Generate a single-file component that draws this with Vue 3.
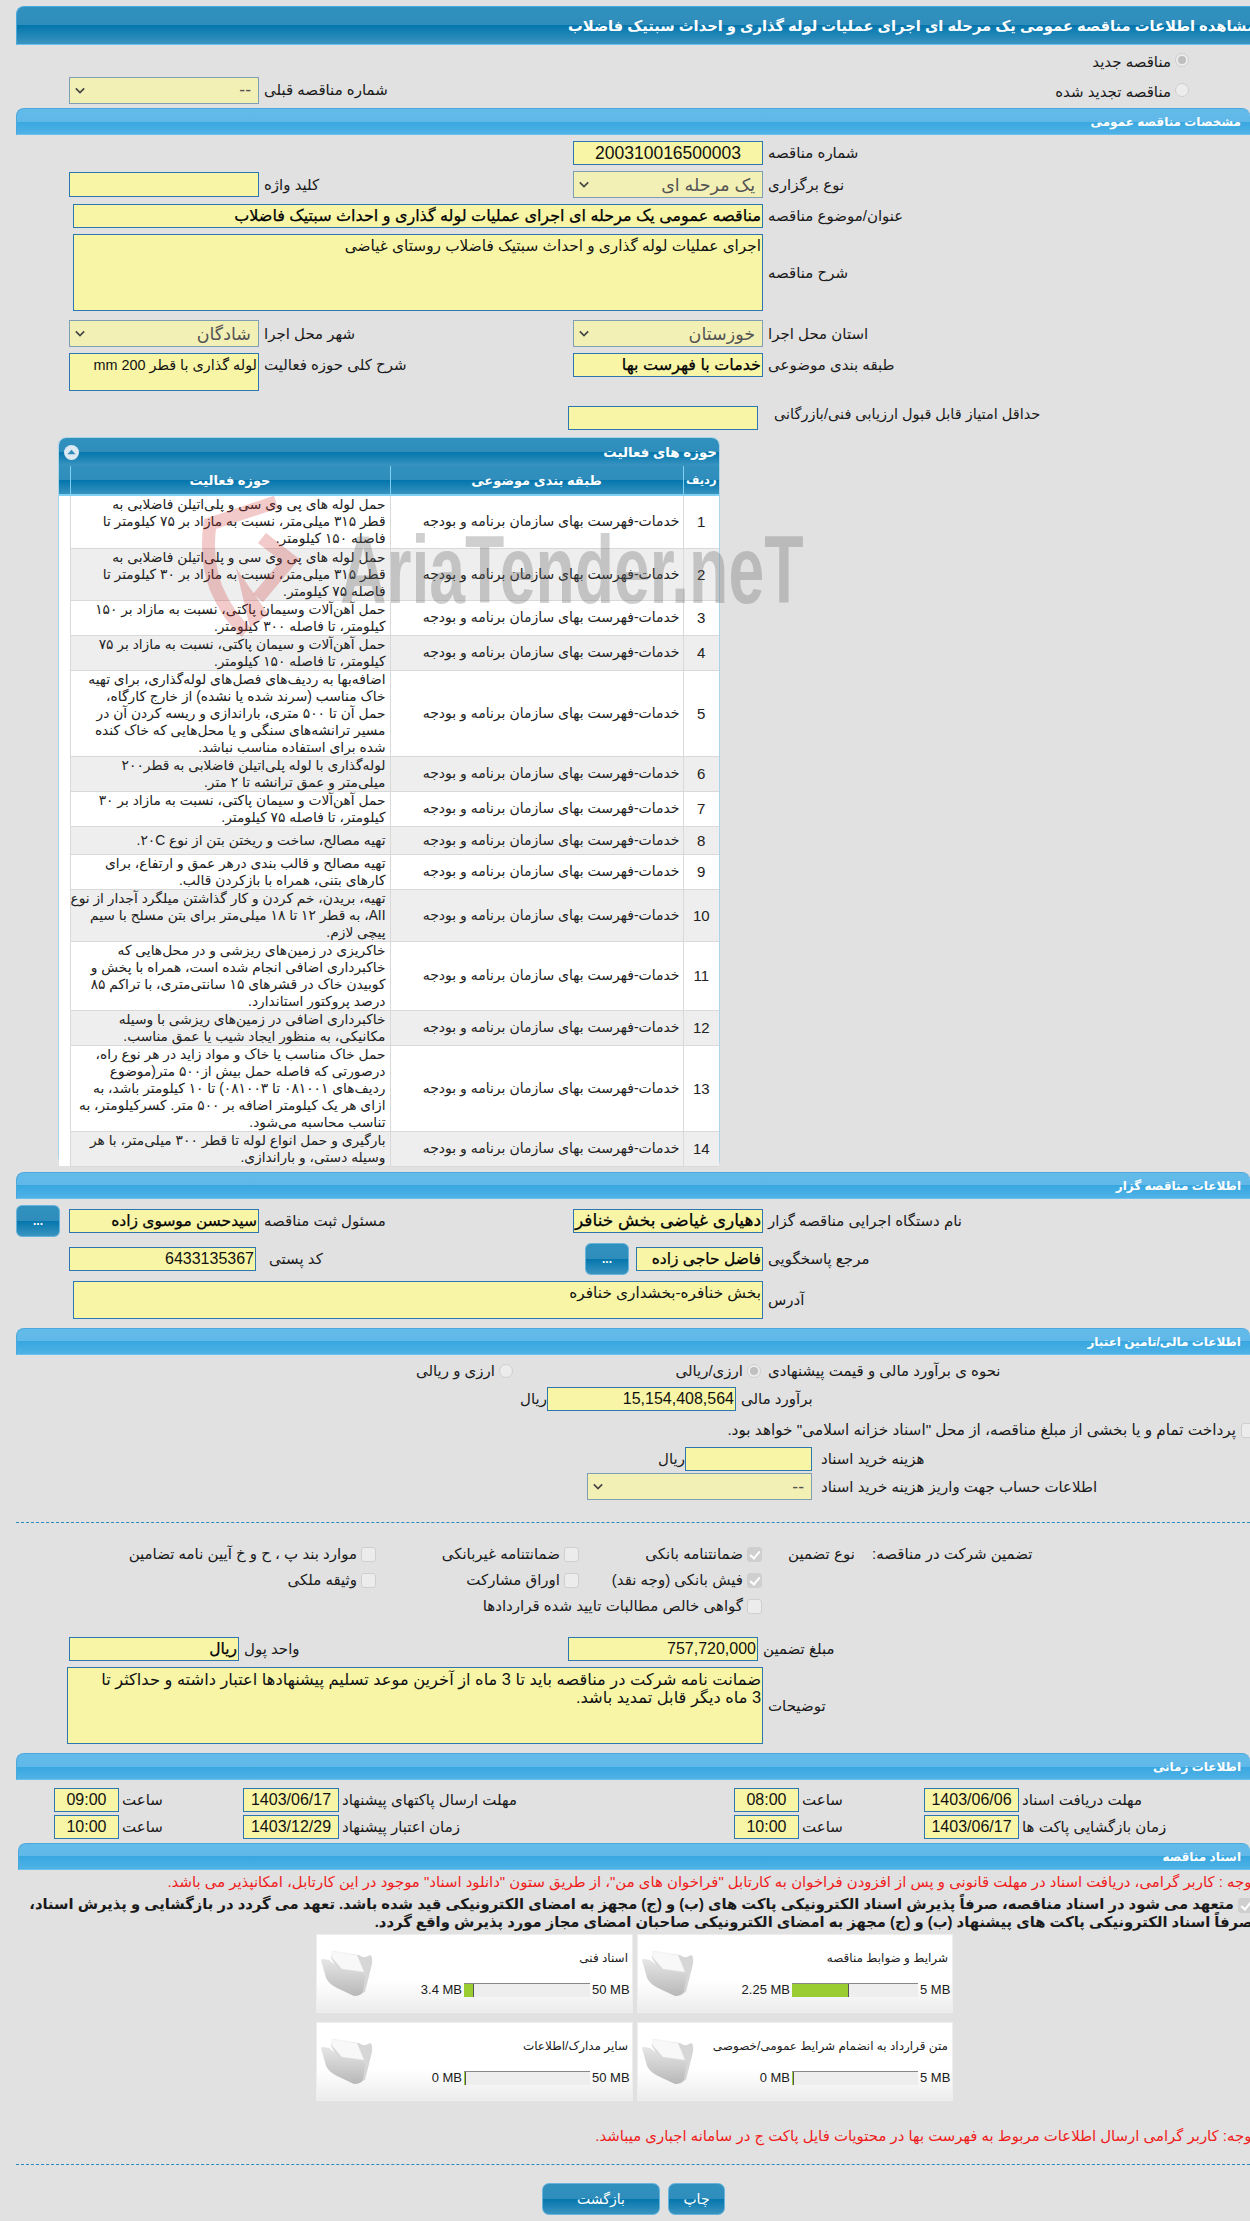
<script setup>
const rows = [
  ["حمل لوله های پی وی سی و پلی‌اتیلن فاضلابی به\nقطر ۳۱۵ میلی‌متر، نسبت به مازاد بر ۷۵ کیلومتر تا\nفاصله ۱۵۰ کیلومتر.", 52],
  ["حمل لوله های پی وی سی و پلی‌اتیلن فاضلابی به\nقطر ۳۱۵ میلی‌متر، نسبت به مازاد بر ۳۰ کیلومتر تا\nفاصله ۷۵ کیلومتر.", 52],
  ["حمل آهن‌آلات وسیمان پاکتی، نسبت به مازاد بر ۱۵۰\nکیلومتر، تا فاصله ۳۰۰ کیلومتر.", 35],
  ["حمل آهن‌آلات و سیمان پاکتی، نسبت به مازاد بر ۷۵\nکیلومتر، تا فاصله ۱۵۰ کیلومتر.", 35],
  ["اضافه‌بها به ردیف‌های فصل‌های لوله‌گذاری، برای تهیه\nخاک مناسب (سرند شده یا نشده) از خارج کارگاه،\nحمل آن تا ۵۰۰ متری، باراندازی و ریسه کردن آن در\nمسیر ترانشه‌های سنگی و یا محل‌هایی که خاک کنده\nشده برای استفاده مناسب نباشد.", 86],
  ["لوله‌گذاری با لوله پلی‌اتیلن فاضلابی به قطر۲۰۰\nمیلی‌متر و عمق ترانشه تا ۲ متر.", 35],
  ["حمل آهن‌آلات و سیمان پاکتی، نسبت به مازاد بر ۳۰\nکیلومتر، تا فاصله ۷۵ کیلومتر.", 35],
  ["تهیه مصالح، ساخت و ریختن بتن از نوع ۲۰C.", 28],
  ["تهیه مصالح و قالب بندی درهر عمق و ارتفاع، برای\nکارهای بتنی، همراه با بازکردن قالب.", 35],
  ["تهیه، بریدن، خم کردن و کار گذاشتن میلگرد آجدار از نوع\nAII، به قطر ۱۲ تا ۱۸ میلی‌متر برای بتن مسلح با سیم\nپیچی لازم.", 52],
  ["خاکریزی در زمین‌های ریزشی و در محل‌هایی که\nخاکبرداری اضافی انجام شده است، همراه با پخش و\nکوبیدن خاک در قشرهای ۱۵ سانتی‌متری، با تراکم ۸۵\nدرصد پروکتور استاندارد.", 69],
  ["خاکبرداری اضافی در زمین‌های ریزشی با وسیله\nمکانیکی، به منظور ایجاد شیب یا عمق مناسب.", 35],
  ["حمل خاک مناسب یا خاک و مواد زاید در هر نوع راه،\nدرصورتی که فاصله حمل بیش از۵۰۰ متر(موضوع\nردیف‌های ۰۸۱۰۰۱ تا ۰۸۱۰۰۳) تا ۱۰ کیلومتر باشد، به\nازای هر یک کیلومتر اضافه بر ۵۰۰ متر. کسرکیلومتر، به\nتناسب محاسبه می‌شود.", 86],
  ["بارگیری و حمل انواع لوله تا قطر ۳۰۰ میلی‌متر، با هر\nوسیله دستی، و باراندازی.", 35],
]
const cards = [
  { t: "اسناد فنی", max: "50 MB", val: "3.4 MB", pct: 8 },
  { t: "شرایط و ضوابط مناقصه", max: "5 MB", val: "2.25 MB", pct: 45 },
  { t: "سایر مدارک/اطلاعات", max: "50 MB", val: "0 MB", pct: 0 },
  { t: "متن قرارداد به انضمام شرایط عمومی/خصوصی", max: "5 MB", val: "0 MB", pct: 0 },
]
</script>

<template>
  <div class="page">
    <div class="bar dark title"><span>مشاهده اطلاعات مناقصه عمومی یک مرحله ای اجرای عملیات لوله گذاری و احداث سبتیک فاضلاب</span></div>

    <div class="intro">
      <div class="radio-line"><i class="radio on"></i><span>مناقصه جدید</span></div>
      <div class="g">
        <span></span>
        <div class="inp sel"><svg class="chev" viewBox="0 0 12 8"><path d="M1 1.5l5 5 5-5" /></svg><span>--</span></div>
        <label class="lbl">شماره مناقصه قبلی</label>
        <div class="radio-line second"><i class="radio"></i><span>مناقصه تجدید شده</span></div>
      </div>
    </div>

    <div class="bar light"><span>مشخصات مناقصه عمومی</span></div>

    <div class="g mt6">
      <span class="c3"></span>
      <div class="inp num center">200310016500003</div>
      <label class="lbl">شماره مناقصه</label>
    </div>
    <div class="g mt6 h27">
      <span></span>
      <div class="inp h25"></div>
      <label class="lbl">کلید واژه</label>
      <div class="inp sel"><svg class="chev" viewBox="0 0 12 8"><path d="M1 1.5l5 5 5-5" /></svg><span>یک مرحله ای</span></div>
      <label class="lbl">نوع برگزاری</label>
    </div>
    <div class="g mt6">
      <span></span>
      <div class="inp big span3">مناقصه عمومی یک مرحله ای اجرای عملیات لوله گذاری و احداث سبتیک فاضلاب</div>
      <label class="lbl">عنوان/موضوع مناقصه</label>
    </div>
    <div class="g mt6">
      <span></span>
      <div class="inp area span3 h77">اجرای عملیات لوله گذاری و احداث سبتیک فاضلاب روستای غیاضی</div>
      <label class="lbl">شرح مناقصه</label>
    </div>
    <div class="g mt9">
      <span></span>
      <div class="inp sel"><svg class="chev" viewBox="0 0 12 8"><path d="M1 1.5l5 5 5-5" /></svg><span>شادگان</span></div>
      <label class="lbl">شهر محل اجرا</label>
      <div class="inp sel"><svg class="chev" viewBox="0 0 12 8"><path d="M1 1.5l5 5 5-5" /></svg><span>خوزستان</span></div>
      <label class="lbl">استان محل اجرا</label>
    </div>
    <div class="g mt6 top">
      <span></span>
      <div class="inp area h38 small">لوله گذاری با قطر 200 mm</div>
      <label class="lbl ltop">شرح کلی حوزه فعالیت</label>
      <div class="inp big">خدمات با فهرست بها</div>
      <label class="lbl ltop">طبقه بندی موضوعی</label>
    </div>
    <div class="score">
      <div class="inp big"></div>
      <label class="lbl">حداقل امتیاز قابل قبول ارزیابی فنی/بازرگانی</label>
    </div>

    <section class="panel">
      <div class="panel-title dark">
        <i class="collapse"><svg viewBox="0 0 10 6"><path d="M5 0.5L9.5 5.5H.5z" /></svg></i>
        <span>حوزه های فعالیت</span>
      </div>
      <table>
        <colgroup><col class="w12" /><col class="w320" /><col class="w293" /><col class="w37" /></colgroup>
        <thead class="dark">
          <tr><th></th><th>حوزه فعالیت</th><th>طبقه بندی موضوعی</th><th class="th-idx">ردیف</th></tr>
        </thead>
        <tbody>
          <tr v-for="(r, i) in rows" :key="i" :class="{ alt: i % 2 }">
            <td class="blank" :style="{ height: r[1] + 'px' }"></td>
            <td class="act">{{ r[0] }}</td>
            <td class="cat">خدمات-فهرست بهای سازمان برنامه و بودجه</td>
            <td class="idx">{{ i + 1 }}</td>
          </tr>
        </tbody>
      </table>
      <div class="mark">
        <svg viewBox="0 0 110 145" class="shield">
          <path class="sh" d="M76 6 L10 28 Q5 62 16 92 Q28 120 46 136" />
          <path class="sh" d="M62 42 L90 64 L58 102" />
          <path class="sh2" d="M36 72 L50 132 L68 118 Z" />
        </svg>
        <span class="mark-text">AriaTender.neT</span>
      </div>
    </section>

    <div class="bar light mt7"><span>اطلاعات مناقصه گزار</span></div>
    <div class="g mt6 h32">
      <div class="dots-cell"><button class="dots dark">...</button></div>
      <div class="inp mid">سیدحسن موسوی زاده</div>
      <label class="lbl">مسئول ثبت مناقصه</label>
      <div class="inp mid wide">دهیاری غیاضی بخش خنافره</div>
      <label class="lbl">نام دستگاه اجرایی مناقصه گزار</label>
    </div>
    <div class="g mt6 h32">
      <span></span>
      <div class="inp num2 w187">6433135367</div>
      <label class="lbl l7">کد پستی</label>
      <div class="ref">
        <button class="dots dark">...</button>
        <div class="inp mid">فاضل حاجی زاده</div>
      </div>
      <label class="lbl">مرجع پاسخگویی</label>
    </div>
    <div class="g mt6">
      <span></span>
      <div class="inp area span3 addr">بخش خنافره-بخشداری خنافره</div>
      <label class="lbl">آدرس</label>
    </div>

    <div class="bar light mt9"><span>اطلاعات مالی/تامین اعتبار</span></div>
    <div class="g money-type">
      <span></span>
      <div class="choices">
        <div class="choice first"><i class="radio on"></i><span>ارزی/ریالی</span></div>
        <div class="choice"><i class="radio"></i><span>ارزی و ریالی</span></div>
      </div>
      <label class="lbl">نحوه ی برآورد مالی و قیمت پیشنهادی</label>
    </div>
    <div class="f estimate">
      <span class="unit">ریال</span>
      <div class="inp num2 w189">15,154,408,564</div>
      <label class="lbl">برآورد مالی</label>
    </div>
    <div class="pay"><i class="check"></i><span>پرداخت تمام و یا بخشی از مبلغ مناقصه، از محل "اسناد خزانه اسلامی" خواهد بود.</span></div>
    <div class="f cost">
      <span class="unit">ریال</span>
      <div class="inp big w127"></div>
      <label class="lbl">هزینه خرید اسناد</label>
    </div>
    <div class="f account">
      <div class="inp sel w225"><svg class="chev" viewBox="0 0 12 8"><path d="M1 1.5l5 5 5-5" /></svg><span>--</span></div>
      <label class="lbl">اطلاعات حساب جهت واریز هزینه خرید اسناد</label>
    </div>
    <hr class="dotted d1" />

    <div class="gu first">
      <div class="opt a"><i class="check"></i><span>موارد بند پ ، ح و خ آیین نامه تضامین</span></div>
      <div class="opt b"><i class="check"></i><span>ضمانتنامه غیربانکی</span></div>
      <div class="opt c"><i class="check on"></i><span>ضمانتنامه بانکی</span></div>
      <label class="gu-l1">نوع تضمین</label>
      <label class="gu-l2">تضمین شرکت در مناقصه:</label>
    </div>
    <div class="gu">
      <div class="opt a"><i class="check"></i><span>وثیقه ملکی</span></div>
      <div class="opt b"><i class="check"></i><span>اوراق مشارکت</span></div>
      <div class="opt c"><i class="check on"></i><span>فیش بانکی (وجه نقد)</span></div>
    </div>
    <div class="gu">
      <div></div><div></div>
      <div class="opt c"><i class="check"></i><span>گواهی خالص مطالبات تایید شده قراردادها</span></div>
    </div>

    <div class="f amount">
      <div class="inp mid w170">ریال</div>
      <label class="lbl w329">واحد پول</label>
      <div class="inp num2 w190">757,720,000</div>
      <label class="lbl">مبلغ تضمین</label>
    </div>
    <div class="f note-row">
      <div class="inp area w696 note">ضمانت نامه شرکت در مناقصه باید تا 3 ماه از آخرین موعد تسلیم پیشنهادها اعتبار داشته و حداکثر تا<br />3 ماه دیگر قابل تمدید باشد.</div>
      <label class="lbl">توضیحات</label>
    </div>

    <div class="bar light mt9"><span>اطلاعات زمانی</span></div>
    <div class="times t1">
      <span></span>
      <div class="inp tm">09:00</div><label class="lbl">ساعت</label>
      <div class="inp tm">1403/06/17</div><label class="lbl">مهلت ارسال پاکتهای پیشنهاد</label>
      <div class="inp tm">08:00</div><label class="lbl">ساعت</label>
      <div class="inp tm">1403/06/06</div><label class="lbl">مهلت دریافت اسناد</label>
    </div>
    <div class="times t2">
      <span></span>
      <div class="inp tm">10:00</div><label class="lbl">ساعت</label>
      <div class="inp tm">1403/12/29</div><label class="lbl">زمان اعتبار پیشنهاد</label>
      <div class="inp tm">10:00</div><label class="lbl">ساعت</label>
      <div class="inp tm">1403/06/17</div><label class="lbl">زمان بازگشایی پاکت ها</label>
    </div>

    <div class="bar light docs"><span>اسناد مناقصه</span></div>
    <p class="red n1">توجه : کاربر گرامی، دریافت اسناد در مهلت قانونی و پس از افزودن فراخوان به کارتابل "فراخوان های من"، از طریق ستون "دانلود اسناد" موجود در این کارتابل، امکانپذیر می باشد.</p>
    <div class="commit">
      <p><i class="check on"></i> متعهد می شود در اسناد مناقصه، صرفاً پذیرش اسناد الکترونیکی پاکت های (ب) و (ج) مجهز به امضای الکترونیکی قید شده باشد. تعهد می گردد در بازگشایی و پذیرش اسناد،<br />صرفاً اسناد الکترونیکی پاکت های پیشنهاد (ب) و (ج) مجهز به امضای الکترونیکی صاحبان امضای مجاز مورد پذیرش واقع گردد.</p>
    </div>

    <div class="cards">
      <div v-for="c in cards" :key="c.t" class="card">
        <svg class="folder" viewBox="0 0 52 47">
          <defs>
            <linearGradient id="fg" x1="0" y1="0" x2="0" y2="1"><stop offset="0" stop-color="#e6e6e6" /><stop offset="1" stop-color="#b8b8b8" /></linearGradient>
          </defs>
          <path d="M12 2 L38 5 Q42 8 45 7 L49 5 Q52 6 51 14 L44 42 L33 46 L10 8 Z" fill="#d6d6d6" />
          <path d="M11 1 L36 5 L43 22 L21 19 L11 8 Z" fill="#f8f8f8" stroke="#e8e8e8" stroke-width=".5" />
          <path d="M0 10 Q0 9 2 9 L8 10 L21 20 L42 23 Q45 24 44 28 L42 42 Q40 46 33 46 L16 38 Q8 34 5 28 Z" fill="url(#fg)" />
        </svg>
        <div class="card-body">
          <div class="card-title">{{ c.t }}</div>
          <div class="meter">
            <span class="m-val">{{ c.val }}</span>
            <div class="m-bar"><div class="m-fill" :style="{ width: c.pct + '%' }"></div></div>
            <span class="m-max">{{ c.max }}</span>
          </div>
        </div>
      </div>
    </div>

    <p class="red n2">توجه: کاربر گرامی ارسال اطلاعات مربوط به فهرست بها در محتویات فایل پاکت ج در سامانه اجباری میباشد.</p>
    <hr class="dotted d2" />
    <div class="actions">
      <button class="act-btn dark back">بازگشت</button>
      <button class="act-btn dark print">چاپ</button>
    </div>
  </div>
</template>

<style>
html, body { margin: 0; background: #e1e1e1; }
</style>

<style scoped>
.page {
  position: relative; width: 1250px; height: 2221px; overflow: hidden; background: #e1e1e1; color: #1a1a1a;
  padding-top: 6px; box-sizing: border-box;
  font-family: "Liberation Sans", "DejaVu Sans", sans-serif; font-size: 15px;
}
.dark { background: linear-gradient(#3191be 0, #2f8dbb 50%, #0476ad 50%, #3a94c0 100%); }
.bar { margin-left: 16px; border: 1px solid #4ba8dd; border-bottom-color: #6cc0ee; border-right: 0; border-radius: 8px 8px 0 0; box-sizing: border-box; display: flex; direction: rtl; align-items: center; white-space: nowrap; color: #fff; font-weight: bold; }
.title { height: 39px; font-size: 14.7px; border-radius: 8px 0 0 0; }
.title span { margin-right: -6px; }
.light { height: 27px; background: linear-gradient(#63bbe9 0, #5fb8e8 50%, #38a7e0 50%, #4fb2e6 100%); font-size: 12px; padding-right: 9px; }
.mt6 { margin-top: 6px; } .mt7 { margin-top: 7px; } .mt9 { margin-top: 9px; }

.intro { height: 63px; }
.radio-line { display: flex; direction: rtl; align-items: center; height: 30px; padding-right: 61px; }
.radio-line .radio { margin-left: 4px; }
.radio-line span { padding-top: 3px; }
.second { grid-column: 4 / 6; }
.radio { display: inline-block; width: 14px; height: 14px; border-radius: 50%; background: #ececec; border: 1px solid #cfcfcf; box-sizing: border-box; flex: none; position: relative; }
.radio.on::after { content: ""; position: absolute; inset: 2px; border-radius: 50%; background: #bfbfbf; }

.g { display: grid; grid-template-columns: 69px 190px 314px 190px 1fr; align-items: center; }
.top { align-items: start; }
.h27 { height: 27px; }
.h32 { height: 32px; }
.c3 { grid-column: 1 / 4; }
.lbl { padding-left: 5px; direction: rtl; text-align: left; white-space: nowrap; }
.ltop { padding-top: 3px; }
.l7 { padding-left: 10px; }

.inp { height: 24px; box-sizing: border-box; background: #f8f6a6; border: 1px solid #2c77ad; direction: rtl; padding: 0 1px; white-space: nowrap; overflow: hidden; line-height: 22px; color: #111; }
.big { font-size: 16px; color: #000; -webkit-text-stroke: .25px #000; }
.mid { font-size: 15.5px; color: #000; -webkit-text-stroke: .25px #000; }
.wide { font-size: 17px; }
.num { font-size: 17.5px; }
.num2 { font-size: 16px; }
.center { text-align: center; }
.h25 { height: 25px; }
.span3 { grid-column: 2 / 5; margin-left: 4px; }
.area { white-space: normal; line-height: 22px; font-size: 15.3px; }
.small { font-size: 14.4px; }
.note { font-size: 16.3px; line-height: 18px; padding-top: 2px; }
.h77 { height: 77px; }
.h38 { height: 38px; }
.addr { height: 38px; }
.sel { background: #f3f0b6; border-color: #7d9fb3; color: #555; display: flex; align-items: center; justify-content: space-between; height: 27px; padding: 0 7px 0 5px; font-size: 17.5px; }
.chev { width: 10px; height: 7px; fill: none; stroke: #444; stroke-width: 2; order: 2; }
.w187 { width: 187px; } .w189 { width: 189px; } .w190 { width: 190px; flex: none; } .w127 { width: 127px; } .w225 { width: 225px; } .w170 { width: 170px; flex: none; } .w696 { width: 696px; flex: none; } .w329 { width: 329px; flex: none; box-sizing: border-box; }

.score { display: flex; margin: 15px 0 0 568px; }
.score .inp { width: 190px; flex: none; }
.score .lbl { padding-left: 16px; font-size: 14.5px; }

.panel { position: relative; margin: 7px 0 0 58px; width: 662px; height: 728px; box-sizing: border-box; border: 1px solid #a9d4ea; border-radius: 8px 8px 4px 8px; background: #fff; }
.panel-title { height: 28px; display: flex; align-items: center; justify-content: space-between; direction: ltr; color: #fff; font-weight: bold; font-size: 13.4px; padding: 0 2px 0 5px; box-sizing: border-box; border-radius: 7px 7px 0 0; }
.panel-title span { direction: rtl; }
.collapse { width: 15px; height: 15px; border-radius: 50%; background: #dde9f2; display: flex; align-items: center; justify-content: center; }
.collapse svg { width: 9px; height: 6px; fill: #2f8dbb; }
table { border-collapse: collapse; table-layout: fixed; width: 660px; direction: ltr; }
.w12 { width: 11px; } .w320 { width: 320px; } .w293 { width: 293px; } .w37 { width: 36px; }
thead tr { height: 29px; }
th { color: #fff; font-size: 13px; font-weight: bold; direction: rtl; padding: 0; border-left: 1px solid #7fd0f2; white-space: nowrap; border-bottom: 2px solid #7fd0f2; overflow: hidden; }
th:first-child { border-left: 0; }
.th-idx { font-size: 11.5px; }
td { padding: 0; font-size: 13.8px; line-height: 17px; direction: rtl; border-bottom: 1px solid #d9d9d9; color: #222; overflow: hidden; }
.alt td { background: #eee; }
.alt td.blank, td.blank { background: #fff; border-bottom: 0; }
.act { white-space: pre; padding-right: 4px; border-left: 1px solid #d9d9d9; }
.cat { white-space: nowrap; padding-right: 3px; border-left: 1px solid #d9d9d9; font-size: 14px; }
.idx { text-align: center; border-left: 1px solid #d9d9d9; font-size: 15px; }

.mark { position: absolute; left: 141px; top: 58px; width: 610px; height: 145px; pointer-events: none; }
.shield { position: absolute; left: 0; top: 0; width: 110px; height: 145px; fill: none; }
.sh { stroke: rgba(205, 45, 45, .25); stroke-width: 13; fill: none; }
.sh2 { fill: rgba(205, 45, 45, .25); }
.mark-text { position: absolute; left: 140px; top: 26px; font: bold 96px/1 "Liberation Sans", sans-serif; color: rgba(95, 95, 95, .3); white-space: nowrap; transform: scaleX(.67); transform-origin: left top; }

.dots-cell { padding-left: 16px; }
.dots { width: 44px; height: 32px; border: 1px solid #66b4dc; border-radius: 6px; color: #fff; padding: 0; font-size: 12px; font-weight: bold; display: block; line-height: 1; }
.ref { display: flex; align-items: center; padding-left: 12px; gap: 7px; }
.ref .inp { width: 127px; }

.money-type { height: 32px; margin-top: 0; }
.choices { grid-column: 2 / 5; display: flex; direction: rtl; }
.choice { display: flex; gap: 4px; align-items: center; }
.choice.first { width: 250px; padding-right: 2px; box-sizing: border-box; }

.f { display: flex; align-items: center; }
.estimate { padding-left: 519px; }
.unit { width: 28px; flex: none; direction: rtl; }
.pay { display: flex; direction: rtl; height: 22px; align-items: center; margin: 8px 0 0; gap: 5px; font-size: 15.3px; }
.pay .check { margin-right: -6px; }
.cost { padding-left: 657px; margin-top: 6px; }
.cost .lbl, .account .lbl { padding-left: 9px; }
.account { padding-left: 587px; margin-top: 2px; }
.check { display: inline-block; flex: none; width: 15px; height: 15px; box-sizing: border-box; border: 1px solid #cfcfcf; border-radius: 3px; background: #ececec; position: relative; vertical-align: middle; }
.check.on { background: #cfcfcf; }
.check.on::after { content: ""; position: absolute; left: 4px; top: 1px; width: 4px; height: 8px; border: solid #fff; border-width: 0 2px 2px 0; transform: rotate(40deg); }
.dotted { border: 0; border-top: 1px dashed #2a8cc0; margin: 0 0 0 16px; }
.d1 { margin-top: 22px; }

.gu { display: grid; grid-template-columns: 380px 202px 184px 106px 1fr; height: 26px; align-items: center; }
.gu.first { margin-top: 18px; }
.opt { display: flex; direction: rtl; gap: 4px; align-items: center; white-space: nowrap; }
.opt.a { padding-right: 4px; } .opt.b { padding-right: 3px; } .opt.c { padding-right: 4px; }
.gu-l1 { direction: rtl; text-align: left; padding-left: 22px; white-space: nowrap; }
.gu-l2 { direction: rtl; text-align: left; white-space: nowrap; }

.amount { padding-left: 69px; margin-top: 18px; }
.note-row { padding-left: 67px; margin-top: 6px; }
.note-row .inp { height: 77px; }

.times { display: grid; grid-template-columns: 54px 65px 124px 96px 395px 65px 125px 95px 1fr; align-items: center; }
.times .lbl { padding-left: 3px; }
.t1 { margin-top: 8px; }
.t2 { margin-top: 3px; }
.tm { font-size: 16px; text-align: center; direction: ltr; height: 24px; padding: 0; }
.docs { margin: 4px 0 0 18px; }

p { margin: 0; }
.red { color: #ef1c1c; direction: rtl; white-space: nowrap; margin-right: -6px; font-size: 14.9px; }
.n1 { height: 21px; line-height: 24px; }
.commit { direction: rtl; height: 43px; }
.commit p { font-weight: bold; font-size: 14.75px; line-height: 18px; white-space: nowrap; padding-top: 4px; margin-right: -3px; }

.cards { display: grid; grid-template-columns: 317px 316px; column-gap: 4px; row-gap: 9px; margin-left: 316px; }
.card { height: 79px; box-sizing: border-box; border: 1px solid #eee; background: linear-gradient(#fff 60%, #ececec 100%); display: flex; padding: 15px 4px 0 4px; }
.folder { width: 52px; height: 47px; flex: none; }
.card-body { flex: 1; direction: rtl; min-width: 0; }
.card-title { font-size: 12px; line-height: 17px; white-space: nowrap; }
.meter { display: flex; direction: ltr; justify-content: flex-end; align-items: center; margin-top: 15px; font-size: 13px; gap: 2px; }
.m-val, .m-max { white-space: nowrap; }
.m-max { width: 36px; text-align: right; }
.card:nth-child(even) .m-max { width: 28px; }
.m-bar { width: 126px; height: 14px; background: #eee; border-top: 1px solid #888; box-sizing: border-box; flex: none; }
.m-fill { height: 100%; background: #9acd32; border-right: 1px solid #555; box-sizing: border-box; min-width: 2px; }

.n2 { margin-top: 26px; height: 18px; line-height: 18px; }
.d2 { margin-top: 19px; }
.actions { display: flex; margin: 18px 0 0 542px; gap: 8px; }
.act-btn { height: 32px; border: 1px solid #66b4dc; border-radius: 7px; color: #fff; font-size: 14px; padding: 0; font-family: inherit; }
.back { width: 118px; } .print { width: 57px; }
</style>
